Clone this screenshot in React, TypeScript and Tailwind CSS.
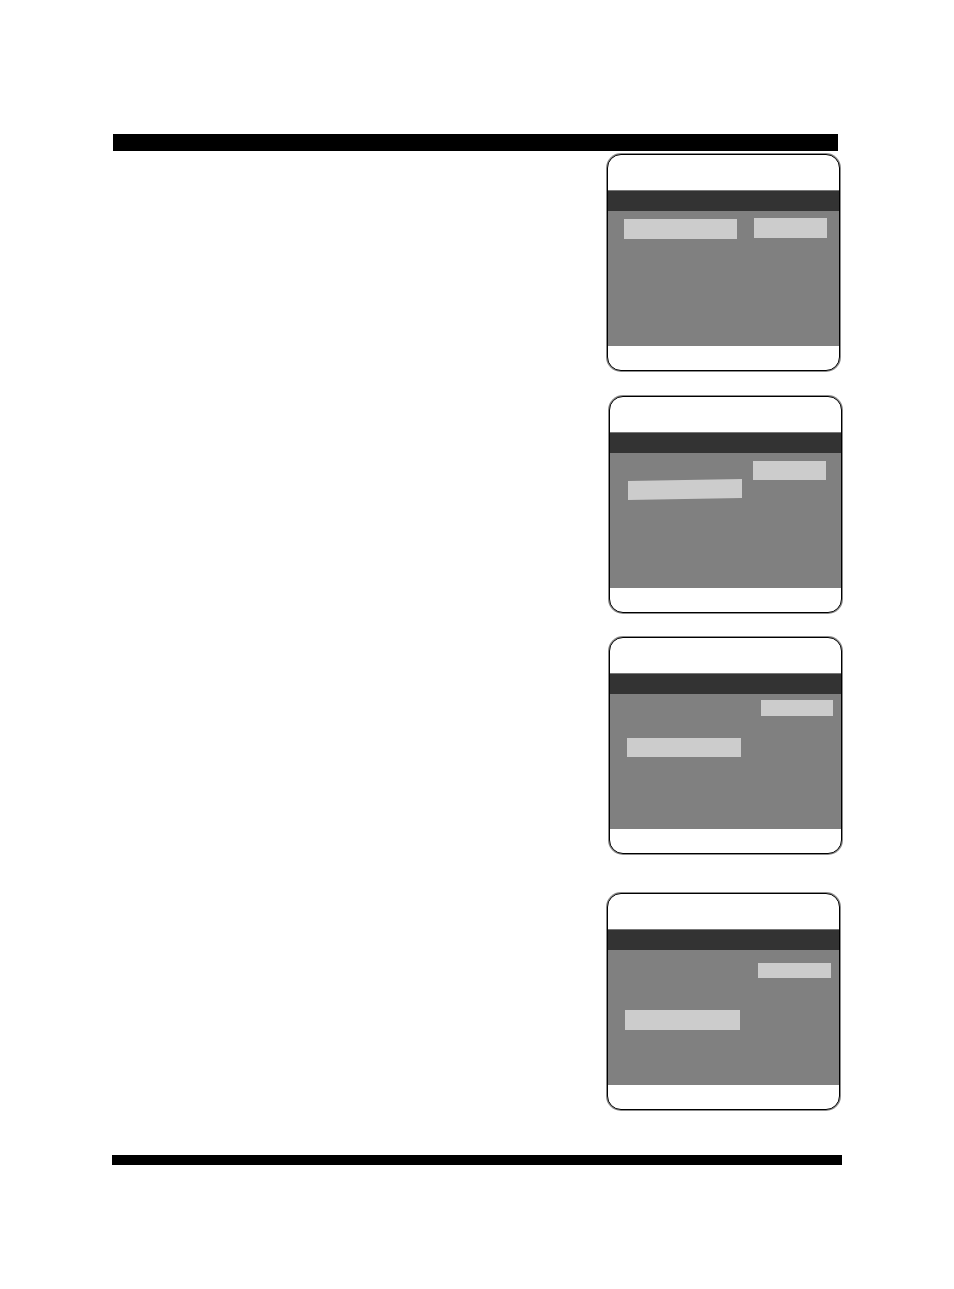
import { clsx } from "clsx";

type ScreenProps = {
  className?: string;
  label: string;
  value: string;
};

function Screen({ className, label, value }: ScreenProps) {
  return (
    <section
      className={clsx(
        "flex w-[233px] flex-col overflow-hidden rounded-[14px] border border-black bg-white ring-1 ring-black/45",
        className
      )}
    >
      <div className="h-[35px]" />
      <div className="h-[21px] border-t border-[#777777] bg-[#333333]" />
      {/* Highlighted item on the left, its value on the right */}
      <div className="flex h-[135px] items-start justify-between bg-[#808080]">
        <div className={clsx("bg-[#cccccc]", label)} />
        <div className={clsx("bg-[#cccccc]", value)} />
      </div>
      <div className="h-6" />
    </section>
  );
}

function App() {
  return (
    <main className="min-h-screen bg-white px-28 pt-[134px] pb-[124px]">
      <div className="mr-1 ml-px h-[17px] bg-black" />
      <div className="mt-[3px] flex flex-col items-end">
        <Screen
          className="mr-0.5"
          label="ml-4 mt-2 h-5 w-[113px]"
          value="mr-3 mt-[7px] h-5 w-[73px]"
        />
        <Screen
          className="mt-[25px]"
          label="ml-[18px] mt-[27px] h-[19px] w-[114px] -skew-y-1"
          value="mr-[15px] mt-2 h-[19px] w-[73px]"
        />
        <Screen
          className="mt-6"
          label="ml-[17px] mt-11 h-[19px] w-[114px]"
          value="mr-2 mt-1.5 h-4 w-[72px]"
        />
        <Screen
          className="mt-[39px] mr-0.5"
          label="ml-[17px] mt-[60px] h-5 w-[115px]"
          value="mr-2 mt-[13px] h-[15px] w-[73px]"
        />
      </div>
      <div className="mt-[45px] h-2.5 bg-black" />
    </main>
  );
}

export default App;
